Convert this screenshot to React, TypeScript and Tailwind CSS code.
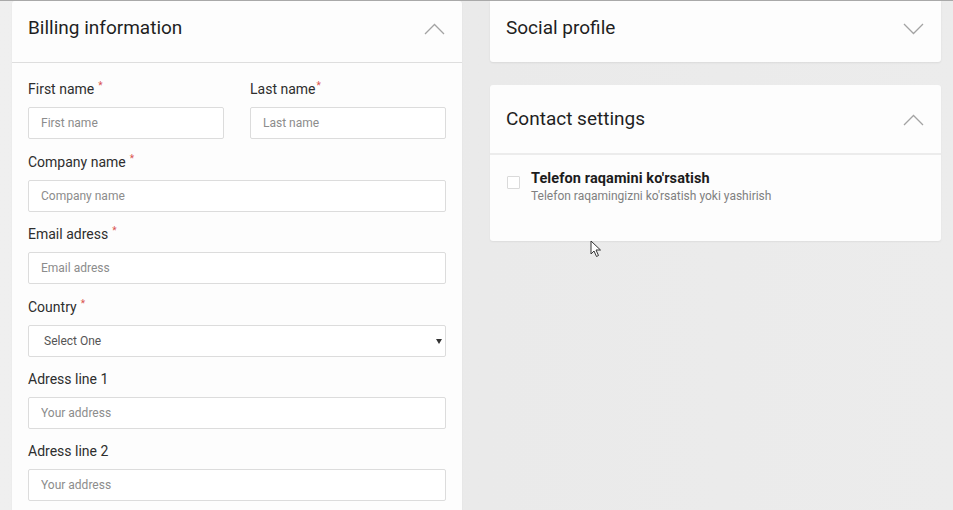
import type { ReactNode } from 'react';

function Chevron({ up }: { up?: boolean }) {
  return (
    <svg width="21" height="12" viewBox="0 0 21 12" fill="none" className="shrink-0">
      <path
        d={up ? 'M1 11 L10.5 1.5 L20 11' : 'M1 1 L10.5 10.5 L20 1'}
        stroke="#a3a3a3"
        strokeWidth="1.3"
      />
    </svg>
  );
}

function CardHeader({ title, up, className }: { title: string; up?: boolean; className: string }) {
  return (
    <div className={`flex justify-between pl-4 pr-[17px] ${className}`}>
      <h2 className="text-[19px] leading-6 text-[#1f1f1f]">{title}</h2>
      <div className="pt-[7px]">
        <Chevron up={up} />
      </div>
    </div>
  );
}

function Label({ children, star = true, tight }: { children: ReactNode; star?: boolean; tight?: boolean }) {
  return (
    <label className="flex h-5 items-center text-[14px] text-[#2e2e2e] mb-2">
      {children}
      {star && (
        <span className={`text-[#d9534f] text-[10px] self-start -mt-[1px] ${tight ? 'ml-[1px]' : 'ml-[4px]'}`}>*</span>
      )}
    </label>
  );
}

function Input({ placeholder }: { placeholder: string }) {
  return (
    <input
      placeholder={placeholder}
      className="h-8 w-full rounded-[2px] border border-[#dcdcdc] bg-white px-3 text-[12px] placeholder:text-[#8c8c8c] outline-none"
    />
  );
}

export default function App() {
  return (
    <div
      className="relative h-[510px] w-[953px] overflow-hidden border-t border-[#a9a9a9] bg-gradient-to-r from-[#efefef] via-[#eaeaea] to-[#ececec]"
      style={{ fontFamily: 'Roboto, "Noto Sans", sans-serif' }}
    >
      <div className="flex items-start gap-7 pl-3">
        {/* Billing information */}
        <div className="w-[450px] rounded-t-[3px] bg-[#fdfdfd] shadow-[0_1px_2px_rgba(0,0,0,0.06)]">
          <CardHeader title="Billing information" up className="h-[62px] pt-[15px] border-b border-[#dedede]" />
          <div className="px-4 pt-4">
            <div className="grid grid-cols-2 gap-[26px] mb-[13px]">
              <div>
                <Label>First name</Label>
                <Input placeholder="First name" />
              </div>
              <div>
                <Label tight>Last name</Label>
                <Input placeholder="Last name" />
              </div>
            </div>
            <div className="mb-3">
              <Label>Company name</Label>
              <Input placeholder="Company name" />
            </div>
            <div className="mb-[13px]">
              <Label>Email adress</Label>
              <Input placeholder="Email adress" />
            </div>
            <div className="mb-3">
              <Label>Country</Label>
              <div className="flex h-8 w-full items-center justify-between rounded-[2px] border border-[#dcdcdc] bg-white pl-[15px] pr-[3px] text-[12px] text-[#555]">
                <span>Select One</span>
                <svg width="6" height="5" viewBox="0 0 6 5">
                  <path d="M0 0 H6 L3 5 Z" fill="#333" />
                </svg>
              </div>
            </div>
            <div className="mb-3">
              <Label star={false}>Adress line 1</Label>
              <Input placeholder="Your address" />
            </div>
            <div className="mb-4">
              <Label star={false}>Adress line 2</Label>
              <Input placeholder="Your address" />
            </div>
          </div>
        </div>

        {/* Right column */}
        <div className="flex w-[451px] flex-col gap-[23px]">
          <div className="rounded-b-[3px] bg-[#fdfdfd] shadow-[0_1px_2px_rgba(0,0,0,0.08)]">
            <CardHeader title="Social profile" className="h-[61px] pt-[15px]" />
          </div>

          <div className="h-[156px] rounded-[3px] bg-[#fdfdfd] shadow-[0_1px_2px_rgba(0,0,0,0.06)]">
            <CardHeader title="Contact settings" up className="h-[70px] pt-[22px] border-b-2 border-[#ececec]" />
            <div className="flex items-start gap-[11px] pl-[17px] pt-[15px]">
              <span className="mt-[6px] h-[13px] w-[13px] rounded-[1px] border border-[#dadada] bg-white" />
              <div>
                <div className="text-[14.5px] font-bold leading-[18px] tracking-[0.1px] text-[#1c1c1c]">
                  Telefon raqamini ko'rsatish
                </div>
                <div className="text-[12px] leading-4 text-[#808080]">
                  Telefon raqamingizni ko'rsatish yoki yashirish
                </div>
              </div>
            </div>
          </div>
        </div>
      </div>

      {/* mouse cursor */}
      <svg className="absolute left-[590px] top-[239px]" width="12" height="18" viewBox="0 0 12 18">
        <path d="M1 1 L1 14 L4 11 L6.5 16.5 L8.5 15.5 L6 10 L10.5 10 Z" fill="#fff" stroke="#333" strokeWidth="1" />
      </svg>
    </div>
  );
}
